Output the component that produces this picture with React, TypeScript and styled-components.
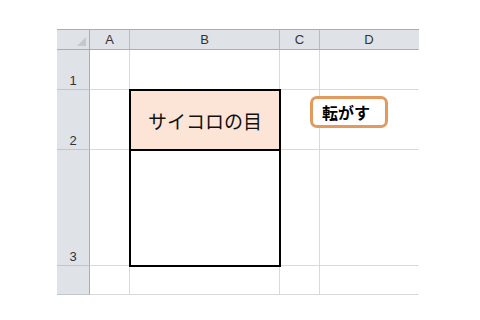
import * as React from 'react';
import styled, { createGlobalStyle } from 'styled-components';

const GlobalStyle = createGlobalStyle`
	html, body {
		margin: 0;
		padding: 0;
		background: #fff;
	}
	body {
		font-family: "Liberation Sans", "Noto Sans CJK JP", sans-serif;
	}
`;

const Page = styled.div`
	width: 480px;
	height: 320px;
	position: relative;
	overflow: hidden;
	padding: 29px 0 0 57px;
	box-sizing: border-box;
`;

const Sheet = styled.div`
	display: grid;
	grid-template-columns: 33px 40px 150px 40px 99px;
	grid-template-rows: 20px 40px 60px 116px 29px;
	border-top: 1px solid #a9aeb5;
	width: 362px;
	box-sizing: border-box;
`;

const Corner = styled.div`
	background: #dfe2e7;
	border-right: 1px solid #a9aeb5;
	border-bottom: 1px solid #a9aeb5;
	display: flex;
	align-items: flex-end;
	justify-content: flex-end;
	padding: 0 3px 3px 0;
	box-sizing: border-box;
	&::after {
		content: '';
		width: 0;
		height: 0;
		border-left: 9px solid transparent;
		border-bottom: 9px solid #c4c7cc;
	}
`;

const ColHead = styled.div<{ $last?: boolean }>`
	background: #dfe2e7;
	border-right: 1px solid ${p => (p.$last ? 'transparent' : '#b8bcc2')};
	border-bottom: 1px solid #a9aeb5;
	display: flex;
	align-items: center;
	justify-content: center;
	font-size: 13px;
	color: #333;
	box-sizing: border-box;
`;

const RowHead = styled.div`
	background: #dfe2e7;
	border-right: 1px solid #a9aeb5;
	border-bottom: 1px solid #c2c6cc;
	display: flex;
	align-items: flex-end;
	justify-content: center;
	padding-bottom: 1px;
	font-size: 13px;
	color: #333;
	box-sizing: border-box;
`;

const Cell = styled.div<{ $last?: boolean }>`
	border-right: 1px solid ${p => (p.$last ? 'transparent' : '#d9d9d9')};
	border-bottom: 1px solid #d9d9d9;
	box-sizing: border-box;
`;

const DiceTable = styled.div`
	grid-column: 3;
	grid-row: 3 / span 2;
	margin: -1px;
	border: 2px solid #000;
	display: flex;
	flex-direction: column;
	position: relative;
	z-index: 1;
`;

const DiceHeader = styled.div`
	height: 58px;
	background: #fce4d6;
	border-bottom: 2px solid #000;
	display: flex;
	align-items: center;
	justify-content: center;
	font-family: "Noto Sans CJK JP", sans-serif;
	font-size: 19px;
	color: #111;
`;

const DiceValue = styled.div`
	flex: 1;
	background: #fff;
`;

const RollButton = styled.button`
	position: absolute;
	left: 310px;
	top: 96px;
	width: 78px;
	height: 32px;
	box-sizing: border-box;
	border: 3px solid #e29a5e;
	border-radius: 7px;
	background: #fff;
	padding: 0 0 0 9px;
	text-align: left;
	font-family: "Noto Sans CJK JP", sans-serif;
	font-weight: 700;
	font-size: 16px;
	color: #000;
	cursor: pointer;
	z-index: 2;
`;

const cols = ['A', 'B', 'C', 'D'];
const rows = ['1', '2', '3', ''];

export default function App() {
	return (
		<Page>
			<GlobalStyle />
			<Sheet>
				<Corner />
				{cols.map((c, i) => (
					<ColHead key={c} $last={i === cols.length - 1}>{c}</ColHead>
				))}
				{rows.map((r, ri) => (
					<React.Fragment key={ri}>
						<RowHead>{r}</RowHead>
						{cols.map((c, ci) =>
							// B2:B3 is drawn by DiceTable
							(c === 'B' && (ri === 1 || ri === 2)) ? null : (
								<Cell key={c} $last={ci === cols.length - 1} />
							)
						)}
					</React.Fragment>
				))}
				<DiceTable>
					<DiceHeader>サイコロの目</DiceHeader>
					<DiceValue />
				</DiceTable>
			</Sheet>
			<RollButton>転がす</RollButton>
		</Page>
	);
}
